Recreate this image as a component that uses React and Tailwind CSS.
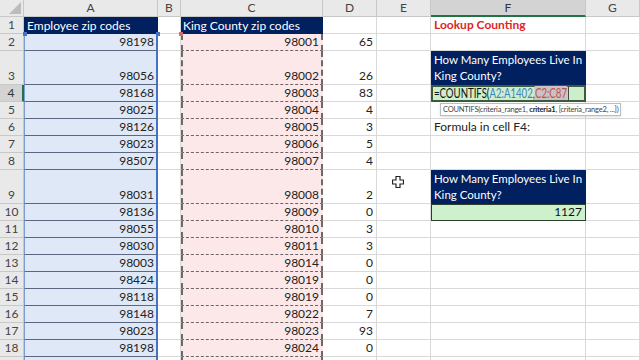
import React from 'react'

const font = { fontFamily: 'Lato, "Liberation Sans", sans-serif' }

const data = [
  { n: 1, a: 'Employee zip codes', c: 'King County zip codes' },
  { n: 2, a: '98198', c: '98001', d: '65' },
  { n: 3, tall: true, a: '98056', c: '98002', d: '26' },
  { n: 4, a: '98168', c: '98003', d: '83' },
  { n: 5, a: '98025', c: '98004', d: '4' },
  { n: 6, a: '98126', c: '98005', d: '3' },
  { n: 7, a: '98023', c: '98006', d: '5' },
  { n: 8, a: '98507', c: '98007', d: '4' },
  { n: 9, tall: true, a: '98031', c: '98008', d: '2' },
  { n: 10, a: '98136', c: '98009', d: '0' },
  { n: 11, a: '98055', c: '98010', d: '3' },
  { n: 12, a: '98030', c: '98011', d: '3' },
  { n: 13, a: '98003', c: '98014', d: '0' },
  { n: 14, a: '98424', c: '98019', d: '0' },
  { n: 15, a: '98118', c: '98019', d: '0' },
  { n: 16, a: '98148', c: '98022', d: '7' },
  { n: 17, a: '98023', c: '98023', d: '93' },
  { n: 18, a: '98198', c: '98024', d: '0' },
  { n: 19, a: '', c: '', d: '' },
]

const cols = ['A', 'B', 'C', 'D', 'E', 'F', 'G']

function Cursor() {
  return (
    <svg width="12" height="12" viewBox="0 0 12 12" className="absolute left-[15px] top-[6px]">
      <path d="M4 0.5h4v3.5h3.5v4h-3.5v3.5h-4v-3.5h-3.5v-4h3.5z" fill="#fff" stroke="#222" strokeWidth="1.2" />
    </svg>
  )
}

function FCell({ n }) {
  const base = 'border-r border-b border-[#d9d9d9] flex items-end px-[3px] leading-[16px]'
  if (n === 1)
    return <div className={`${base} text-[#e0261f] font-bold`}>Lookup Counting</div>
  if (n === 3 || n === 9)
    return (
      <div className="bg-[#002060] text-white text-[11.5px] whitespace-nowrap overflow-hidden flex flex-col justify-end px-[3px] leading-[16px] border-b border-[#002060]">
        <span>How Many Employees Live In</span>
        <span>King County?</span>
      </div>
    )
  if (n === 4)
    return (
      <div className="relative bg-[#cdeecb] border-2 border-[#3b5a3e] flex items-end px-[1px] leading-[14px] text-[13px] text-[#111] whitespace-nowrap overflow-visible">
        <span className="flex items-end origin-left scale-x-[0.74]">
          <span>=COUNTIFS(</span>
          <span className="text-[#3f7fc8]">A2:A1402</span>
          <span>,</span>
          <span className="text-[#c0504d] bg-[#c9c3c3]">C2:C87</span>
          <span className="w-px h-[13px] bg-black ml-[1px]" />
        </span>
      </div>
    )
  if (n === 5)
    return (
      <div className={`${base} relative`}>
        <div className="absolute left-[9px] top-[1px] h-[13px] bg-white border border-[#bdbdbd] shadow-sm text-[7.5px] leading-[11px] tracking-[-0.2px] text-[#444] px-[2px] whitespace-nowrap z-10">
          COUNTIFS(criteria_range1, <b className="text-[#222]">criteria1</b>, [criteria_range2, ...])
        </div>
      </div>
    )
  if (n === 6) return <div className={`${base} text-[#222]`}>Formula in cell F4:</div>
  if (n === 10)
    return (
      <div className="bg-[#cdf2cb] border border-[#2f3f2f] flex items-end justify-end px-[3px] leading-[16px] text-[#111]">
        1127
      </div>
    )
  return <div className={base} />
}

export default function App() {
  return (
    <div className="w-[640px] h-[360px] overflow-hidden bg-white text-[12px] text-[#222]" style={font}>
      <div
        className="grid grid-cols-[24px_134px_23px_142px_54px_54px_155px_1fr]"
        style={{ gridTemplateRows: '17px ' + data.map(r => (r.tall ? '34px' : '17px')).join(' ') }}
      >
        {/* header row */}
        <div className="bg-[#e9e9e9] border-r border-b border-[#c8c8c8] relative">
          <div className="absolute right-[2px] bottom-[2px] w-0 h-0 border-l-[12px] border-l-transparent border-b-[12px] border-b-[#bcbcbc]" />
        </div>
        {cols.map(c => (
          <div
            key={c}
            className={
              c === 'F'
                ? 'bg-[#d3d3d3] border-r border-[#c8c8c8] border-b-2 border-b-[#217346] flex items-center justify-center text-[#333] text-[12px]'
                : 'bg-[#e9e9e9] border-r border-b border-[#c8c8c8] flex items-center justify-center text-[#444] text-[12px]'
            }
          >
            {c}
          </div>
        ))}

        {data.map(r => (
          <React.Fragment key={r.n}>
            <div
              className={
                r.n === 4
                  ? 'bg-[#d3d3d3] border-r-2 border-r-[#217346] border-b border-[#c8c8c8] flex items-end justify-center text-[#333] leading-[16px] text-[12px]'
                  : 'bg-[#e9e9e9] border-r border-b border-[#c8c8c8] flex items-end justify-center text-[#444] leading-[16px] text-[12px]'
              }
            >
              {r.n < 19 ? r.n : ''}
            </div>

            {r.n === 1 ? (
              <div className="relative bg-[#002060] text-white flex items-end px-[2px] leading-[16px] border-l border-[#002060]">
                {r.a}
                <span className="absolute left-[-2px] bottom-[-2px] w-[4px] h-[4px] bg-[#4472c4]" />
                <span className="absolute right-[-2px] bottom-[-2px] w-[4px] h-[4px] bg-[#4472c4] z-10" />
              </div>
            ) : (
              <div className="bg-[#dfe8f6] border-l border-l-[#7d9ccf] border-r-2 border-r-[#4472c4] border-b border-b-[#5c6880] flex items-end justify-end px-[2px] leading-[16px]">
                {r.a}
              </div>
            )}

            <div className="border-r border-b border-[#d9d9d9]" />

            {r.n === 1 ? (
              <div className="relative bg-[#002060] text-white flex items-end px-[2px] leading-[16px]">
                {r.c}
                <span className="absolute left-[-2px] bottom-[-2px] w-[4px] h-[4px] bg-[#d86a6a]" />
              </div>
            ) : (
              <div className="bg-[#fce8e8] border-x-2 border-dashed border-x-[#6a6a6a] border-b border-b-[#6f6464] flex items-end justify-end px-[2px] leading-[16px]">
                {r.c}
              </div>
            )}

            <div className="border-r border-b border-[#d9d9d9] flex items-end justify-end px-[3px] leading-[16px]">
              {r.d}
            </div>

            <div className="relative border-r border-b border-[#d9d9d9]">{r.n === 9 && <Cursor />}</div>

            <FCell n={r.n} />

            <div className="border-r border-b border-[#d9d9d9]" />
          </React.Fragment>
        ))}
      </div>
    </div>
  )
}
